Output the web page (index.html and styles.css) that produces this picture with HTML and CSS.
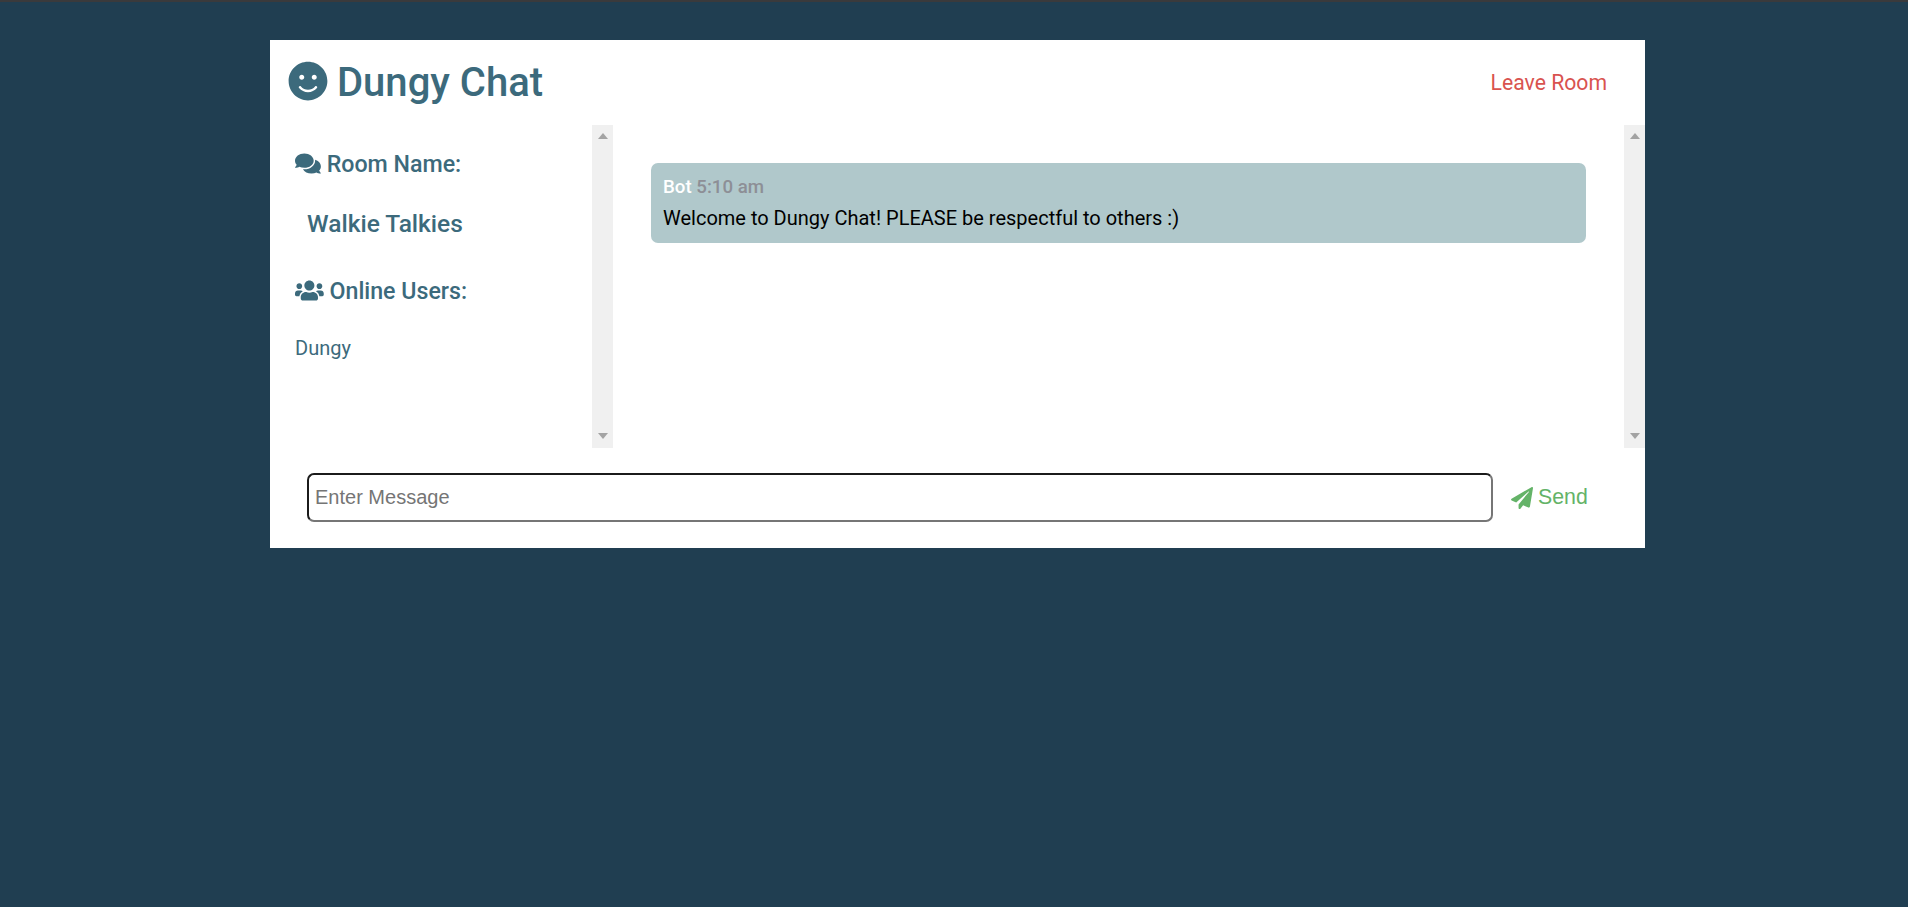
FILE: index.html
```html
<!DOCTYPE html>
<html lang="en">
<head>
    <meta charset="UTF-8">
    <meta name="viewport" content="width=device-width, initial-scale=1.0">
    <title>Dungy Chat</title>
    <link rel="stylesheet" href="styles.css">
</head>
<body>
    <div class="chat-container">
        <header class="chat-header">
            <h1>
                <svg class="icon" viewBox="0 0 496 512"><path d="M248 8C111 8 0 119 0 256s111 248 248 248 248-111 248-248S385 8 248 8zm80 168c17.7 0 32 14.3 32 32s-14.3 32-32 32-32-14.3-32-32 14.3-32 32-32zm-160 0c17.7 0 32 14.3 32 32s-14.3 32-32 32-32-14.3-32-32 14.3-32 32-32zm194.8 170.2C334.3 380.4 292.5 400 248 400s-86.3-19.6-114.8-53.8c-13.6-16.3 11-36.7 24.6-20.5 22.4 26.9 55.2 42.2 90.2 42.2s67.8-15.4 90.2-42.2c13.4-16.2 38.1 4.2 24.6 20.5z"/></svg>
                Dungy Chat
            </h1>
            <a class="leave-btn" href="#">Leave Room</a>
        </header>

        <main class="chat-main">
            <div class="chat-sidebar">
                <div class="sidebar-content">
                    <h3>
                        <svg class="icon" viewBox="0 0 576 512"><path d="M416 192c0-88.4-93.1-160-208-160S0 103.6 0 192c0 34.3 14.1 65.9 38 92-13.4 30.2-35.5 54.2-35.8 54.5-2.2 2.3-2.8 5.7-1.5 8.7S4.8 352 8 352c36.6 0 66.9-12.3 88.7-25 32.2 15.7 70.3 25 111.3 25 114.9 0 208-71.6 208-160zm122 220c23.9-26 38-57.7 38-92 0-66.9-53.5-124.2-129.3-148.1.9 6.6 1.3 13.3 1.3 20.1 0 105.9-107.7 192-240 192-10.8 0-21.3-.8-31.7-1.9C207.8 439.6 281.8 480 368 480c41 0 79.1-9.2 111.3-25 21.8 12.7 52.1 25 88.7 25 3.2 0 6.1-1.9 7.3-4.8 1.3-2.9.7-6.3-1.5-8.7-.3-.3-22.4-24.2-35.8-54.5z"/></svg>
                        Room Name:
                    </h3>
                    <h2 class="room-name">Walkie Talkies</h2>
                    <h3>
                        <svg class="icon" viewBox="0 0 640 512"><path d="M96 224c35.3 0 64-28.7 64-64s-28.7-64-64-64-64 28.7-64 64 28.7 64 64 64zm448 0c35.3 0 64-28.7 64-64s-28.7-64-64-64-64 28.7-64 64 28.7 64 64 64zm32 32h-64c-17.6 0-33.5 7.1-45.1 18.6 40.3 22.1 68.9 62 75.1 109.4h66c17.7 0 32-14.3 32-32v-32c0-35.3-28.7-64-64-64zm-256 0c61.9 0 112-50.1 112-112S381.9 32 320 32 208 82.1 208 144s50.1 112 112 112zm76.8 32h-8.3c-20.8 10-43.9 16-68.5 16s-47.6-6-68.5-16h-8.3C179.6 288 128 339.6 128 403.2V432c0 26.5 21.5 48 48 48h288c26.5 0 48-21.5 48-48v-28.8c0-63.6-51.6-115.2-115.2-115.2zm-223.7-13.4C161.5 263.1 145.6 256 128 256H64c-35.3 0-64 28.7-64 64v32c0 17.7 14.3 32 32 32h65.9c6.3-47.4 34.9-87.3 75.2-109.4z"/></svg>
                        Online Users:
                    </h3>
                    <ul class="users">
                        <li>Dungy</li>
                    </ul>
                </div>
                <div class="scrollbar"><span class="arrow-up"></span><span class="arrow-down"></span></div>
            </div>

            <div class="chat-messages">
                <div class="messages-content">
                    <div class="message">
                        <p class="meta"><span class="bot">Bot</span> 5:10 am</p>
                        <p class="text">Welcome to Dungy Chat! PLEASE be respectful to others :)</p>
                    </div>
                </div>
                <div class="scrollbar"><span class="arrow-up"></span><span class="arrow-down"></span></div>
            </div>
        </main>

        <div class="chat-form">
            <input class="msg-input" type="text" placeholder="Enter Message">
            <button class="send-btn">
                <svg class="icon" viewBox="0 0 512 512"><path d="M476 3.2L12.5 270.6c-18.1 10.4-15.8 35.6 2.2 43.2L121 358.4l287.3-253.2c5.5-4.9 13.3 2.6 8.6 8.3L176 407v80.5c0 23.6 28.5 32.9 42.5 15.8L282 426l124.6 52.2c14.2 6 30.4-2.9 33-18.2l72-432C515 7.8 493.3-6.8 476 3.2z"/></svg>
                Send
            </button>
        </div>
    </div>
</body>
</html>
```

FILE: styles.css
```css
* {
    box-sizing: border-box;
}
html, body {
    height: 100%;
}
body {
    margin: 0;
    padding-top: 38px;
    background-color: #203e51;
    border-top: 2px solid #3a3a3c;
    font-family: Roboto, sans-serif;
    color: #3c6a7c;
}
.icon {
    fill: currentColor;
    display: inline-block;
}
.chat-container {
    width: 1375px;
    height: 508px;
    margin-left: 270px;
    background-color: #fff;
}
.chat-header {
    height: 85px;
    display: flex;
    justify-content: space-between;
    align-items: center;
    padding: 0 38px 0 18px;
}
.chat-header h1 {
    margin: 0;
    font-size: 40px;
    font-weight: 500;
    display: flex;
    align-items: center;
    gap: 9px;
}
.chat-header h1 .icon {
    width: 40px;
    height: 40px;
    margin-bottom: 3px;
}
.leave-btn {
    color: #d9534f;
    text-decoration: none;
    font-size: 21.2px;
}
.chat-main {
    display: grid;
    grid-template-columns: 343px 1fr;
    height: 323px;
}
.chat-sidebar,
.chat-messages {
    display: flex;
    min-width: 0;
}
.sidebar-content {
    flex: 1;
    padding: 25px 0 0 25px;
}
.sidebar-content h3 {
    margin: 0;
    font-size: 23.2px;
    font-weight: 500;
    line-height: 28px;
}
.sidebar-content h3 .icon {
    height: 23px;
    width: auto;
    vertical-align: -3px;
}
.room-name {
    margin: 31px 0 0;
    padding-left: 12px;
    font-size: 24.5px;
    font-weight: 500;
    line-height: 30px;
    height: 68px;
}
.users {
    list-style: none;
    margin: 31px 0 0;
    padding: 0;
    font-size: 20px;
    line-height: 24px;
}
.scrollbar {
    width: 21px;
    background-color: #f0f0f0;
    display: flex;
    flex-direction: column;
    justify-content: space-between;
    align-items: center;
    padding: 8px 0 9px;
}
.arrow-up,
.arrow-down {
    width: 0;
    height: 0;
    border-left: 5px solid transparent;
    border-right: 5px solid transparent;
}
.arrow-up {
    border-bottom: 6px solid #a3a3a3;
}
.arrow-down {
    border-top: 6px solid #a3a3a3;
}
.messages-content {
    flex: 1;
    padding: 38px 38px 0;
}
.message {
    background-color: #b0c8cb;
    border-radius: 7px;
    height: 80px;
    padding: 12px 12px;
}
.meta,
.text {
    margin: 0;
}
.meta {
    font-size: 18.7px;
    font-weight: 500;
    line-height: 24px;
    color: #8d8f96;
}
.bot {
    color: #fff;
}
.text {
    margin-top: 7px;
    font-size: 20px;
    line-height: 24px;
    color: #000;
}
.chat-form {
    display: flex;
    align-items: center;
    height: 100px;
    padding: 0 0 1px 37px;
}
.msg-input {
    width: 1186px;
    height: 49px;
    padding: 1px 6px;
    border: 2px solid;
    border-color: #1b1b1b #767676 #767676 #1b1b1b;
    border-radius: 7px;
    font-family: "Liberation Sans", Arial, sans-serif;
    font-size: 20px;
    background: #fff;
}
.msg-input::placeholder {
    color: #757575;
}
.send-btn {
    margin-left: 18px;
    padding: 0;
    border: none;
    background: none;
    color: #64b368;
    font-family: "Liberation Sans", Arial, sans-serif;
    font-size: 21.3px;
    display: flex;
    align-items: center;
    gap: 5px;
}
.send-btn .icon {
    width: 22px;
    height: 22px;
}
```
